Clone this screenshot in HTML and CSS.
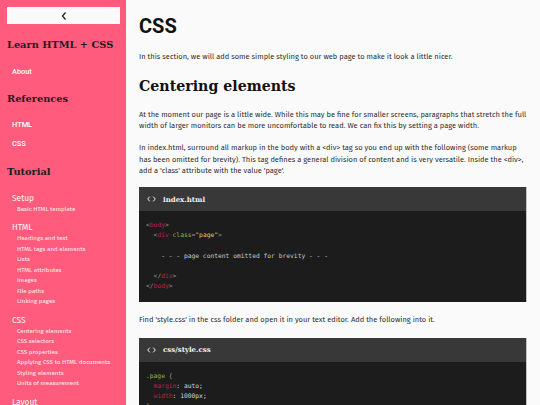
FILE: index.html
```html
<!DOCTYPE html>
<html lang="en">
<head>
<meta charset="utf-8">
<title>CSS</title>
<link rel="stylesheet" href="styles.css">
</head>
<body>
<div class="layout">
  <nav class="sidebar">
    <button class="back" type="button" aria-label="Back">
      <svg width="8" height="10" viewBox="0 0 8 10"><polyline points="5.5,1.5 2.5,5 5.5,8.5" fill="none" stroke="#222" stroke-width="1.3"/></svg>
    </button>
    <h3 class="side-title first">Learn HTML + CSS</h3>
    <a class="side-link">About</a>
    <h3 class="side-title">References</h3>
    <a class="side-link">HTML</a>
    <a class="side-link">CSS</a>
    <h3 class="side-title">Tutorial</h3>
    <div class="groups">
      <div class="group">
        <div class="group-title">Setup</div>
        <ul class="sub">
          <li>Basic HTML template</li>
        </ul>
      </div>
      <div class="group">
        <div class="group-title">HTML</div>
        <ul class="sub">
          <li>Headings and text</li>
          <li>HTML tags and elements</li>
          <li>Lists</li>
          <li>HTML attributes</li>
          <li>Images</li>
          <li>File paths</li>
          <li>Linking pages</li>
        </ul>
      </div>
      <div class="group">
        <div class="group-title">CSS</div>
        <ul class="sub">
          <li>Centering elements</li>
          <li>CSS selectors</li>
          <li>CSS properties</li>
          <li>Applying CSS to HTML documents</li>
          <li>Styling elements</li>
          <li>Units of measurement</li>
        </ul>
      </div>
      <div class="group">
        <div class="group-title">Layout</div>
      </div>
    </div>
  </nav>
  <main class="content">
    <h1 class="title">CSS</h1>
    <p class="text first">In this section, we will add some simple styling to our web page to make it look a little nicer.</p>
    <h2 class="subtitle">Centering elements</h2>
    <p class="text">At the moment our page is a little wide. While this may be fine for smaller screens, paragraphs that stretch the full width of larger monitors can be more uncomfortable to read. We can fix this by setting a page width.</p>
    <p class="text">In index.html, surround all markup in the body with a &lt;div&gt; tag so you end up with the following (some markup has been omitted for brevity). This tag defines a general division of content and is very versatile. Inside the &lt;div&gt;, add a 'class' attribute with the value 'page'.</p>
    <div class="code">
      <div class="code-head">
        <svg class="code-icon" width="9" height="6" viewBox="0 0 9 6"><polyline points="2.8,0.6 0.7,3 2.8,5.4" fill="none" stroke="#e8e8e8" stroke-width="1"/><polyline points="6.2,0.6 8.3,3 6.2,5.4" fill="none" stroke="#e8e8e8" stroke-width="1"/></svg>
        <span class="code-name">index.html</span>
      </div>
<pre class="code-body"><span class="p">&lt;</span><span class="t">body</span><span class="p">&gt;</span>
  <span class="p">&lt;</span><span class="t">div</span> <span class="a">class</span><span class="p">=</span><span class="s">"page"</span><span class="p">&gt;</span>

    - - - page content omitted for brevity - - -

  <span class="p">&lt;/</span><span class="t">div</span><span class="p">&gt;</span>
<span class="p">&lt;/</span><span class="t">body</span><span class="p">&gt;</span>
</pre>
    </div>
    <p class="text">Find 'style.css' in the css folder and open it in your text editor. Add the following into it.</p>
    <div class="code">
      <div class="code-head">
        <svg class="code-icon" width="9" height="6" viewBox="0 0 9 6"><polyline points="2.8,0.6 0.7,3 2.8,5.4" fill="none" stroke="#e8e8e8" stroke-width="1"/><polyline points="6.2,0.6 8.3,3 6.2,5.4" fill="none" stroke="#e8e8e8" stroke-width="1"/></svg>
        <span class="code-name">css/style.css</span>
      </div>
<pre class="code-body"><span class="sel">.page</span> <span class="p">{</span>
  <span class="t">margin</span><span class="v">: auto;</span>
  <span class="t">width</span><span class="v">: 1000px;</span>
<span class="p">}</span>
</pre>
    </div>
  </main>
</div>
</body>
</html>
```

FILE: styles.css
```css
html, body {
  margin: 0;
  padding: 0;
  height: 100%;
}

body {
  background: #fafafa;
  font-family: "Fira Sans", "Open Sans", "Noto Sans", sans-serif;
  overflow: hidden;
}

.layout {
  display: flex;
  height: 405px;
  overflow: hidden;
}

/* Sidebar */
.sidebar {
  flex: none;
  width: 126px;
  box-sizing: border-box;
  padding: 7px 6px 0 7px;
  background: #ff5c7d;
  overflow: hidden;
}

.back {
  display: flex;
  align-items: center;
  justify-content: center;
  width: 113px;
  height: 17px;
  padding: 0;
  border: 0;
  background: #fafafa;
}

.side-title {
  margin: 11.5px 0 9px;
  font-family: "DejaVu Serif", serif;
  font-weight: bold;
  font-size: 9.8px;
  line-height: 14px;
  color: #1c1c1c;
}

.side-title.first {
  margin-top: 14px;
  margin-bottom: 9.5px;
}

.side-link {
  display: block;
  padding-left: 5px;
  font-family: Roboto, sans-serif;
  font-weight: 500;
  font-size: 7.4px;
  line-height: 19px;
  color: #ffffff;
}

.groups {
  padding-top: 5px;
}

.group {
  margin-top: 8px;
}

.group:first-child {
  margin-top: 0;
}

.group-title {
  padding-left: 5px;
  font-size: 8.4px;
  line-height: 11px;
  color: #fff4f6;
}

.sub {
  list-style: none;
  margin: 0;
  padding: 0 0 0 10px;
}

.sub li {
  font-size: 6.2px;
  line-height: 10.5px;
  color: #fff0f3;
  white-space: nowrap;
}

/* Main content */
.content {
  flex: 1;
  min-width: 0;
  padding: 14px 13px 0;
  overflow: hidden;
  color: #2e2e2e;
}

.title {
  margin: 0;
  font-family: Roboto, sans-serif;
  font-weight: 700;
  font-size: 20px;
  line-height: 24px;
  color: #111;
}

.text {
  margin: 11px 0;
  font-size: 7.5px;
  line-height: 11.2px;
}

.text.first {
  margin-top: 13px;
}

.subtitle {
  margin: 13.4px 0 13.4px;
  font-family: "DejaVu Serif", serif;
  font-weight: bold;
  font-size: 14.2px;
  line-height: 20px;
  color: #111;
}

.code {
  margin: 12px 0 12.5px;
  border-right: 1px solid #c4c4c4;
}

.code:first-of-type {
  margin-top: 10.5px;
}

.code-head {
  display: flex;
  align-items: center;
  gap: 7px;
  height: 24px;
  padding-left: 8px;
  background: #383838;
}

.code-icon {
  flex: none;
}

.code-name {
  font-family: "DejaVu Serif", serif;
  font-weight: bold;
  font-size: 7px;
  color: #f2f2f2;
}

.code-body {
  margin: 0;
  padding: 9px 0 10.5px 7px;
  background: #1c1c1c;
  font-family: "DejaVu Sans Mono", monospace;
  font-size: 6.3px;
  line-height: 10.2px;
  color: #c8c8c8;
}

.code-body .p { color: #9a9a9a; }
.code-body .t { color: #b8225a; }
.code-body .a { color: #98b542; }
.code-body .s { color: #e0cf6a; }
.code-body .sel { color: #98b542; }
.code-body .v { color: #d4d4d4; }
```
